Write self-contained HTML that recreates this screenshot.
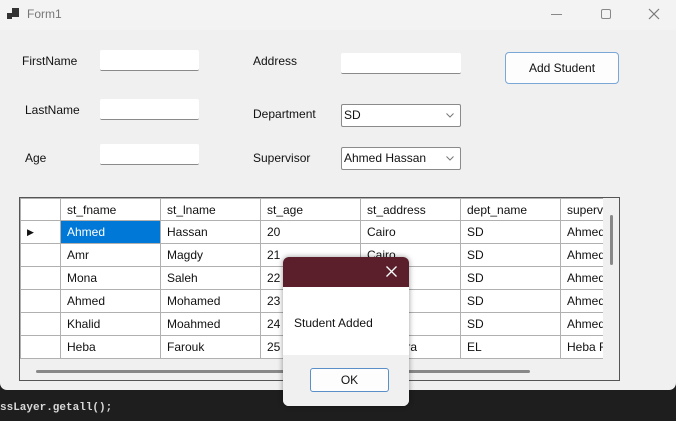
<!DOCTYPE html>
<html><head><style>
*{margin:0;padding:0;box-sizing:border-box}
body{width:676px;height:421px;background:#1e1e1e;position:relative;overflow:hidden;font-family:"Liberation Sans",sans-serif;font-size:12px;color:#111}
.win{position:absolute;left:0;top:0;width:676px;height:390px;background:#f0f0f0;border-radius:0 0 7px 7px}
.title{position:absolute;left:0;top:0;width:676px;height:30px;background:#f3f3f3}
.abs{position:absolute}
.lbl{position:absolute;font-size:12px}
.tb{position:absolute;background:#fff;border-bottom:1px solid #8a8a8a;border-radius:2px}
.cb{position:absolute;background:#fff;border:1px solid #8a8a8a;border-radius:2px;padding:3px 2px;font-size:12px}
.cb svg{position:absolute;right:6px;top:8px}
.grid{position:absolute;left:19px;top:197px;width:601px;height:184px;border:1px solid #555;background:#f0f0f0;overflow:hidden}
table{border-collapse:collapse;position:absolute;left:0;top:0}
td{border:1px solid #b0b0b0;height:23px;padding:0 6px;font-size:12px;background:#fff;white-space:nowrap;overflow:hidden}
tr.h td{height:22px}
.dlg{position:absolute;left:283px;top:257px;width:126px;height:149px;background:#fff;border-radius:6px;overflow:hidden;box-shadow:0 0 6px rgba(0,0,0,.4)}
</style></head><body>
<div class="win">
<div class="title"></div>
<svg class="abs" style="left:7px;top:8px" width="13" height="12"><rect x="0" y="5" width="5" height="6" fill="#333"/><rect x="5" y="0" width="7" height="9" fill="#333"/></svg>
<div class="lbl" style="left:27px;top:7px;color:#777">Form1</div>
<div class="abs" style="left:551px;top:14px;width:11px;height:1px;background:#888"></div>
<div class="abs" style="left:601px;top:9px;width:10px;height:10px;border:1px solid #888;border-radius:2px"></div>
<svg class="abs" style="left:648px;top:8px" width="12" height="12"><path d="M1 1L11 11M11 1L1 11" stroke="#777" stroke-width="1.2"/></svg>

<div class="lbl" style="left:22px;top:54px">FirstName</div>
<div class="lbl" style="left:25px;top:103px">LastName</div>
<div class="lbl" style="left:25px;top:151px">Age</div>
<div class="lbl" style="left:253px;top:54px">Address</div>
<div class="lbl" style="left:253px;top:107px">Department</div>
<div class="lbl" style="left:253px;top:151px">Supervisor</div>
<div class="tb" style="left:100px;top:50px;width:99px;height:21px"></div>
<div class="tb" style="left:100px;top:99px;width:99px;height:21px"></div>
<div class="tb" style="left:100px;top:144px;width:99px;height:21px"></div>
<div class="tb" style="left:341px;top:53px;width:120px;height:21px"></div>
<div class="cb" style="left:341px;top:104px;width:120px;height:23px">SD<svg width="8" height="5"><path d="M0.5 0.5L4 4L7.5 0.5" stroke="#777" fill="none"/></svg></div>
<div class="cb" style="left:341px;top:147px;width:120px;height:23px">Ahmed Hassan<svg width="8" height="5"><path d="M0.5 0.5L4 4L7.5 0.5" stroke="#777" fill="none"/></svg></div>
<div class="abs" style="left:505px;top:52px;width:114px;height:32px;background:#fdfdfd;border:1px solid #7aa7d6;border-radius:4px;text-align:center;line-height:30px">Add Student</div>

<div class="grid">
<table>
<colgroup><col style="width:40px"><col style="width:100px"><col style="width:100px"><col style="width:100px"><col style="width:100px"><col style="width:100px"><col style="width:45px"></colgroup>
<tr class="h"><td></td><td>st_fname</td><td>st_lname</td><td>st_age</td><td>st_address</td><td>dept_name</td><td>superv</td></tr>
<tr><td style="font-size:9px">&#9654;</td><td style="background:#0078d7;color:#fff">Ahmed</td><td>Hassan</td><td>20</td><td>Cairo</td><td>SD</td><td>Ahmed</td></tr>
<tr><td></td><td>Amr</td><td>Magdy</td><td>21</td><td>Cairo</td><td>SD</td><td>Ahmed</td></tr>
<tr><td></td><td>Mona</td><td>Saleh</td><td>22</td><td></td><td>SD</td><td>Ahmed</td></tr>
<tr><td></td><td>Ahmed</td><td>Mohamed</td><td>23</td><td></td><td>SD</td><td>Ahmed</td></tr>
<tr><td></td><td>Khalid</td><td>Moahmed</td><td>24</td><td></td><td>SD</td><td>Ahmed</td></tr>
<tr><td></td><td>Heba</td><td>Farouk</td><td>25</td><td>Menofyra</td><td>EL</td><td>Heba F</td></tr>
</table>
<div class="abs" style="left:583px;top:0;width:17px;height:162px;background:#f0f0f0"></div>
<div class="abs" style="left:590px;top:17px;width:3px;height:50px;background:#888;border-radius:2px"></div>
<div class="abs" style="left:0;top:162px;width:583px;height:22px;background:#f0f0f0"></div>
<div class="abs" style="left:16px;top:172px;width:494px;height:3px;background:#888;border-radius:2px"></div>
</div>
</div>
<div class="abs" style="left:0;top:402px;color:#d8d8d8;font-family:'Liberation Mono',monospace;font-size:11px;font-weight:bold">ssLayer.getall();</div>

<div class="dlg">
<div class="abs" style="left:0;top:0;width:126px;height:30px;background:#5a1f2b"></div>
<svg class="abs" style="left:103px;top:9px" width="11" height="11"><path d="M0.5 0.5L10.5 10.5M10.5 0.5L0.5 10.5" stroke="#fff" stroke-width="1.3"/></svg>
<div class="abs" style="left:11px;top:59px">Student Added</div>
<div class="abs" style="left:0;top:98px;width:126px;height:51px;background:#f0f0f0"></div>
<div class="abs" style="left:27px;top:111px;width:79px;height:24px;background:#fdfdfd;border:1px solid #5a8fc8;border-radius:3px;text-align:center;line-height:22px">OK</div>
</div>
</body></html>
